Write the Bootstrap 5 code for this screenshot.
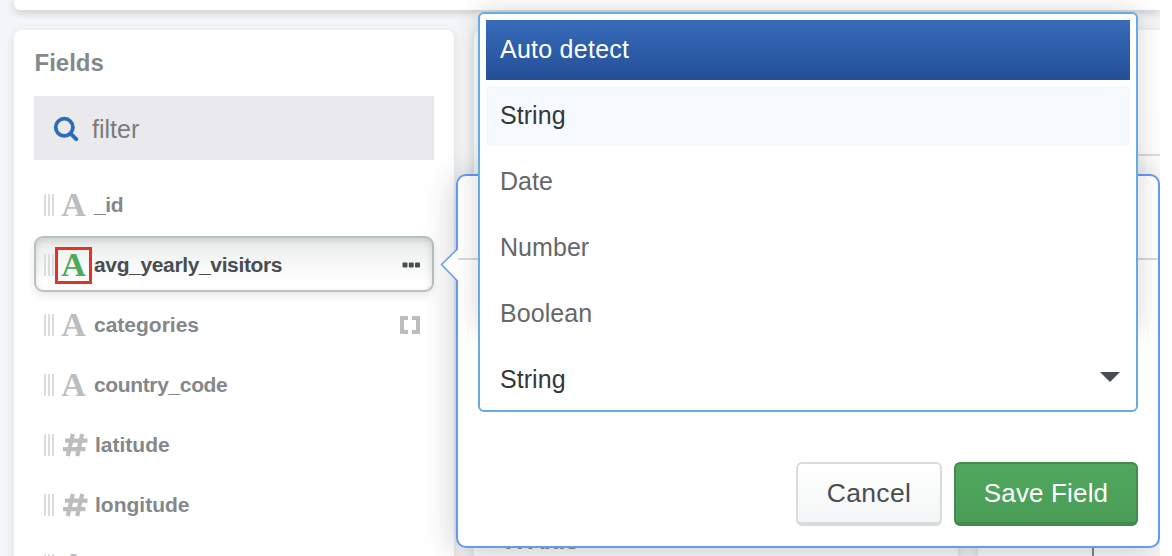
<!DOCTYPE html>
<html lang="en">
<head>
<meta charset="utf-8">
<meta name="viewport" content="width=device-width, initial-scale=1">
<title>Fields</title>
<link href="https://cdn.jsdelivr.net/npm/bootstrap@5.3.0/dist/css/bootstrap.min.css" rel="stylesheet">
<style>
body{background:#fff;font-family:"Liberation Sans",Arial,sans-serif;overflow:hidden}
.workspace{width:1160px;height:556px;background:#f4f5f7;padding-left:14px;gap:20px}
.toolbar-strip{height:10px;background:#fff;border-radius:0 0 0 6px;box-shadow:0 2px 10px rgba(0,0,0,.2);flex:none}
.panels{gap:20px;height:526px;flex:none}
.panel{background:#fff;border-radius:8px 8px 0 0;box-shadow:0 2px 10px rgba(0,0,0,.1);flex:none;height:560px}
.panel-fields{width:440px;padding:0 20px}
.panel-encode{width:484px;padding:496px 32px 0}
.panel-chart{width:182px;border-top-right-radius:0}
.chart-head{height:83px;background:#fff}
.chart-tabs{height:43px;border-bottom:2px solid #dcdddd;background:#fefefe}
.chart-axis{width:2px;height:400px;margin-left:114px;background:#888}
.panel-heading{font-size:24px;font-weight:700;line-height:30px;color:#84888b;margin:0}
.panel-fields .panel-heading{padding:18px 0 18px .5px}
.filter-box{height:64px;background:#eaeaec;padding-left:19px;gap:13px;margin-bottom:16px}
.filter-box svg{margin-top:2px}
.filter-box input{border:0;background:none;outline:0;padding:3px 0 0;font-size:25px;width:250px;color:#777;height:60px}
.filter-box input::placeholder{color:#7c7c7c;opacity:1}
.field-row{height:56px;margin-bottom:4px;border:2px solid transparent;border-radius:9px;padding:0 11px 0 8px;font-size:21px;font-weight:700;line-height:26px;color:#84888b}
.field-row>svg.ms-auto{margin-top:2px}
.field-name{padding-top:2px}
.tight{letter-spacing:-.36px}
.grip{width:10px;height:22px;flex:none;background:repeating-linear-gradient(90deg,#dadddd 0 2px,transparent 2px 4px);margin-top:2px}
.type-a{width:37px;height:37px;flex:none;margin:2px 2px 0 1px;border:3px solid transparent;font:bold 34px/34px "Liberation Serif",serif;color:#bcbdbe;display:flex;align-items:center;justify-content:center}
.type-n{width:26px;height:24px;flex:none;margin:1px 7px 0 8px}
.field-row.selected{border-color:#b8c3c0;background:linear-gradient(#e9eceb,#fff 85%);box-shadow:inset 0 3px 7px rgba(0,0,0,.13),0 4px 8px rgba(0,0,0,.09);color:#494d4f}
.selected .type-a{border-color:#e03428;color:#4caa5b}
.field-popover{position:absolute;left:456px;top:174px;width:704px;height:374px;border:2px solid #6599f3;border-radius:10px;background:#fff;box-shadow:0 4px 34px rgba(0,0,0,.22)}
.popover-tip{position:absolute;left:-18px;top:71px;width:18px;height:36px}
.popover-rule{height:2px;background:#d5d9d8;margin-top:82px}
.popover-actions{padding-right:20px;gap:12px;margin-top:202px}
.act{height:64px;border:2px solid #d9dcdd;border-bottom-width:4px;border-radius:6px;padding:0;font-size:26.5px;line-height:1;color:#494d4f;background:linear-gradient(#fff,#f3f5f6)}
.act-cancel{width:146px;letter-spacing:.3px}
.act-save{width:184px;color:#fff;border-color:#418b4e;background:linear-gradient(#50a85c,#4a9d58);font-size:26px;letter-spacing:.15px}
.type-select{position:absolute;left:478px;top:12px;width:660px;height:400px;border:2px solid #66ace2;border-radius:6px;background:#fff;padding:6px}
.type-select::before{content:"";position:absolute;inset:-2px -2px 80px;z-index:-1;border-radius:6px;box-shadow:0 0 26px rgba(0,0,0,.17)}
.type-option{height:60px;margin-bottom:6px;padding:0 10px 0 14px;font-size:25px;letter-spacing:.05px;color:#676767;flex:none}
.type-option.active-option{background:linear-gradient(#386bba,#234f97);color:#fff;letter-spacing:.25px}
.type-option.hovered{background:#f6faff;color:#363837}
.type-option.current{color:#363837;margin:0;box-shadow:0 -1px 0 #fcfcfc}
.caret{margin-top:-6px}
</style>
</head>
<body>
<main class="workspace position-relative overflow-hidden d-flex flex-column">
  <div class="toolbar-strip"></div>
  <div class="panels d-flex">
    <section class="panel panel-fields">
      <h2 class="panel-heading">Fields</h2>
      <label class="filter-box d-flex align-items-center">
        <svg width="26" height="26" viewBox="0 0 26 26" fill="none" stroke="#286dba" stroke-linecap="round"><circle cx="11.3" cy="11.3" r="8.6" stroke-width="3.8"/><path d="M17.9 17.9 23.2 23.2" stroke-width="4"/></svg>
        <input type="text" placeholder="filter">
      </label>
      <div class="field-row d-flex align-items-center"><span class="grip"></span><span class="type-a">A</span><span class="field-name tight">_id</span></div>
      <div class="field-row selected d-flex align-items-center"><span class="grip"></span><span class="type-a">A</span><span class="field-name tight">avg_yearly_visitors</span>
        <svg class="ms-auto" width="19" height="6" viewBox="0 0 19 6" fill="#494d4f"><rect x=".5" y=".5" width="5" height="5" rx="1"/><rect x="6.8" y=".5" width="5" height="5" rx="1"/><rect x="13" y=".5" width="5" height="5" rx="1"/></svg></div>
      <div class="field-row d-flex align-items-center"><span class="grip"></span><span class="type-a">A</span><span class="field-name">categories</span>
        <svg class="ms-auto" width="21" height="18" viewBox="0 0 21 18" fill="none" stroke="#bcbdbe" stroke-width="4"><path d="M8 2H2V16H8M12 2H18V16H12"/></svg></div>
      <div class="field-row d-flex align-items-center"><span class="grip"></span><span class="type-a">A</span><span class="field-name tight">country_code</span></div>
      <div class="field-row d-flex align-items-center"><span class="grip"></span><svg class="type-n" viewBox="0 0 26 24" fill="none" stroke="#bcbdbe" stroke-width="4.2"><path d="M10.8 1 5.8 23M20.2 1 15.2 23M3 7.6H25.5M1 16.2H23.5"/></svg><span class="field-name">latitude</span></div>
      <div class="field-row d-flex align-items-center"><span class="grip"></span><svg class="type-n" viewBox="0 0 26 24" fill="none" stroke="#bcbdbe" stroke-width="4.2"><path d="M10.8 1 5.8 23M20.2 1 15.2 23M3 7.6H25.5M1 16.2H23.5"/></svg><span class="field-name">longitude</span></div>
      <div class="field-row d-flex align-items-center"><span class="grip"></span><span class="type-a">A</span></div>
    </section>
    <section class="panel panel-encode"><h2 class="panel-heading text-nowrap">X Axis</h2></section>
    <section class="panel panel-chart">
      <div class="chart-head"></div><div class="chart-tabs"></div><div class="chart-axis"></div>
    </section>
  </div>

  <div class="field-popover">
    <svg class="popover-tip" viewBox="0 0 18 36"><path d="M18 1.5 1.5 17.5 18 34.5Z" fill="#fff"/><path d="M18 1.5 1.5 17.5 18 34.5" fill="none" stroke="#6599f3" stroke-width="1.5"/></svg>
    <div class="popover-rule"></div>
    <div class="popover-actions d-flex justify-content-end">
      <button class="act act-cancel" type="button">Cancel</button>
      <button class="act act-save" type="button">Save Field</button>
    </div>
  </div>
  <div style="isolation:isolate">
    <div class="type-select d-flex flex-column" role="listbox">
      <div class="type-option active-option d-flex align-items-center">Auto detect</div>
      <div class="type-option hovered d-flex align-items-center">String</div>
      <div class="type-option d-flex align-items-center">Date</div>
      <div class="type-option d-flex align-items-center">Number</div>
      <div class="type-option d-flex align-items-center">Boolean</div>
      <div class="type-option current d-flex align-items-center justify-content-between">String
        <svg class="caret" width="20" height="10" viewBox="0 0 20 10"><path d="M0 0H20L10 10Z" fill="#494d4f"/></svg></div>
    </div>
  </div>
</main>
<script src="https://cdn.jsdelivr.net/npm/bootstrap@5.3.0/dist/js/bootstrap.bundle.min.js"></script>
</body>
</html>
